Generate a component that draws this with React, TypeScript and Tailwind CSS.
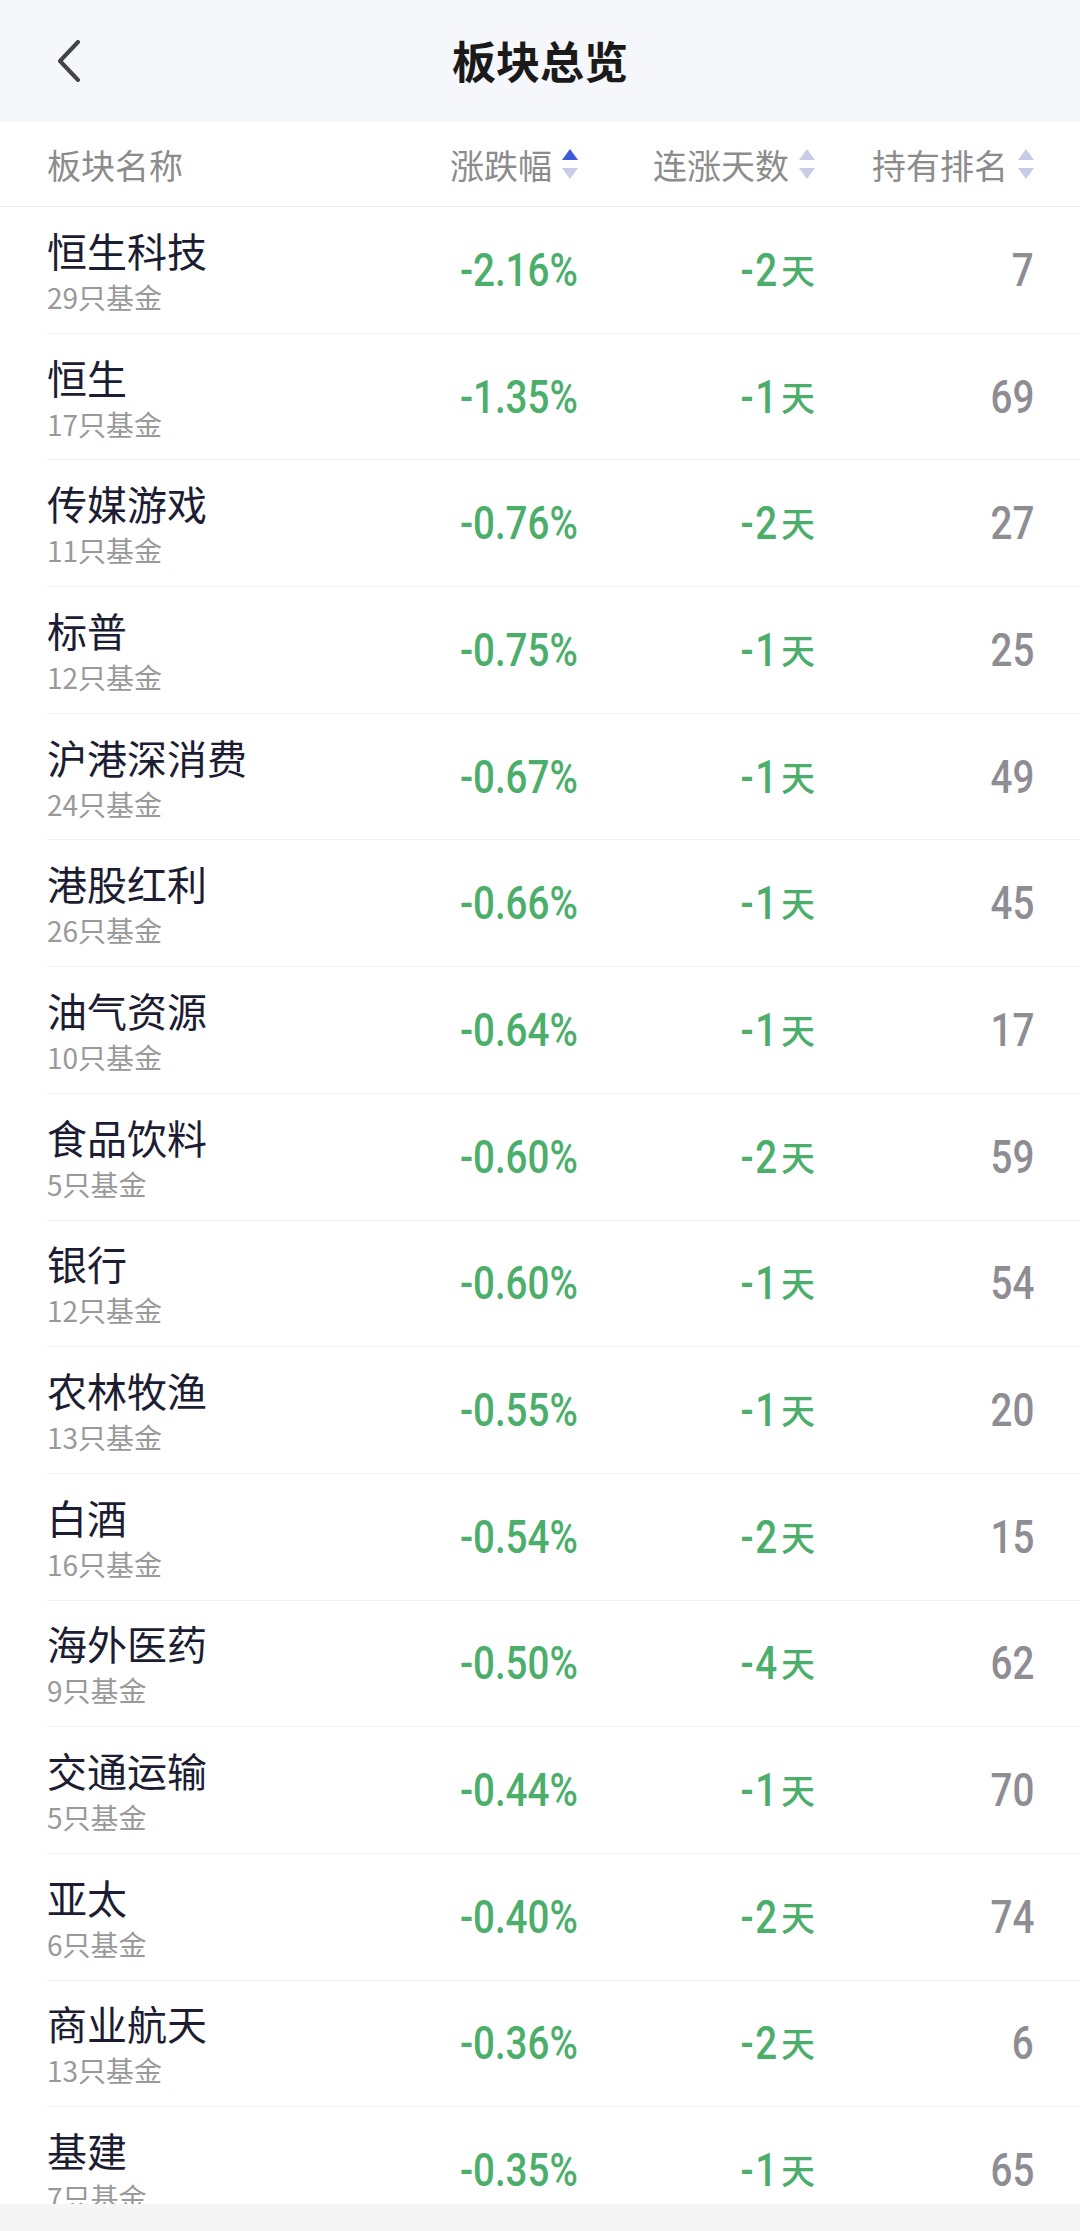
import React from "react";

type Sector = {
  name: string;
  funds: number;
  change: string;
  days: string;
  rank: number;
};

const sectors: Sector[] = [
  { name: "恒生科技", funds: 29, change: "-2.16%", days: "-2", rank: 7 },
  { name: "恒生", funds: 17, change: "-1.35%", days: "-1", rank: 69 },
  { name: "传媒游戏", funds: 11, change: "-0.76%", days: "-2", rank: 27 },
  { name: "标普", funds: 12, change: "-0.75%", days: "-1", rank: 25 },
  { name: "沪港深消费", funds: 24, change: "-0.67%", days: "-1", rank: 49 },
  { name: "港股红利", funds: 26, change: "-0.66%", days: "-1", rank: 45 },
  { name: "油气资源", funds: 10, change: "-0.64%", days: "-1", rank: 17 },
  { name: "食品饮料", funds: 5, change: "-0.60%", days: "-2", rank: 59 },
  { name: "银行", funds: 12, change: "-0.60%", days: "-1", rank: 54 },
  { name: "农林牧渔", funds: 13, change: "-0.55%", days: "-1", rank: 20 },
  { name: "白酒", funds: 16, change: "-0.54%", days: "-2", rank: 15 },
  { name: "海外医药", funds: 9, change: "-0.50%", days: "-4", rank: 62 },
  { name: "交通运输", funds: 5, change: "-0.44%", days: "-1", rank: 70 },
  { name: "亚太", funds: 6, change: "-0.40%", days: "-2", rank: 74 },
  { name: "商业航天", funds: 13, change: "-0.36%", days: "-2", rank: 6 },
  { name: "基建", funds: 7, change: "-0.35%", days: "-1", rank: 65 },
];

function SortArrows({ active }: { active?: boolean }) {
  return (
    <svg width="16" height="30" viewBox="0 0 16 30" className="ml-[10px] shrink-0">
      <polygon points="8,0 16,11 0,11" fill={active ? "#3b5bdb" : "#c9cce6"} />
      <polygon points="0,19 16,19 8,30" fill="#c9cce6" />
    </svg>
  );
}

// the app uses a condensed digit face; Roboto narrowed to match
function Num({ children, className }: { children: React.ReactNode; className?: string }) {
  return (
    <span
      className={`inline-block origin-right scale-x-[0.82] font-['Roboto',sans-serif] font-medium text-[47px] leading-[56px] ${className ?? ""}`}
    >
      {children}
    </span>
  );
}

export default function App() {
  return (
    <div className="w-[1080px] h-[2231px] overflow-hidden bg-white flex flex-col font-['Noto_Sans_CJK_SC',sans-serif]">
      {/* top bar */}
      <div className="h-[122px] shrink-0 bg-[#f6f7fb] grid grid-cols-[1fr_auto_1fr] items-center">
        <div className="pl-[56px] flex items-center">
          <svg width="26" height="42" viewBox="0 0 26 42" fill="none">
            <path d="M22 2 L4 21 L22 40" stroke="#444" strokeWidth="4" strokeLinecap="round" strokeLinejoin="round" />
          </svg>
        </div>
        <h1 className="text-[44px] leading-none font-bold text-[#1a1a1a] pb-[2px]">板块总览</h1>
        <div />
      </div>

      {/* column header */}
      <div className="h-[85px] shrink-0 border-b border-[#eeeeee] pl-[47px] pr-[46px] grid grid-cols-[331px_200px_237px_219px] items-center text-[34px] text-[#8c8c8c]">
        <div>板块名称</div>
        <div className="flex items-center justify-end">
          涨跌幅
          <SortArrows active />
        </div>
        <div className="flex items-center justify-end">
          连涨天数
          <SortArrows />
        </div>
        <div className="flex items-center justify-end">
          持有排名
          <SortArrows />
        </div>
      </div>

      {/* rows */}
      <div className="flex-1 overflow-hidden">
        {sectors.map((s) => (
          <div
            key={s.name}
            className="h-[126.7px] ml-[47px] pr-[46px] border-b border-[#f0f0f0] grid grid-cols-[331px_200px_237px_219px] items-center"
          >
            <div className="flex flex-col">
              <span className="text-[40px] leading-[48px] text-[#1c1d33]">{s.name}</span>
              <span className="mt-[6px] text-[28px] leading-[34px] text-[#999999]">{s.funds}只基金</span>
            </div>
            <div className="text-right text-[#4bae6a]">
              <Num>{s.change}</Num>
            </div>
            <div className="flex items-center justify-end text-[#4bae6a]">
              <Num className="tracking-[2px]">{s.days}</Num>
              <span className="ml-[2px] text-[34px] leading-[40px] font-medium">天</span>
            </div>
            <div className="text-right text-[#8d8d93]">
              <Num>{s.rank}</Num>
            </div>
          </div>
        ))}
      </div>

      {/* bottom bar */}
      <div className="h-[27px] shrink-0 bg-[#f5f5f5]" />
    </div>
  );
}
